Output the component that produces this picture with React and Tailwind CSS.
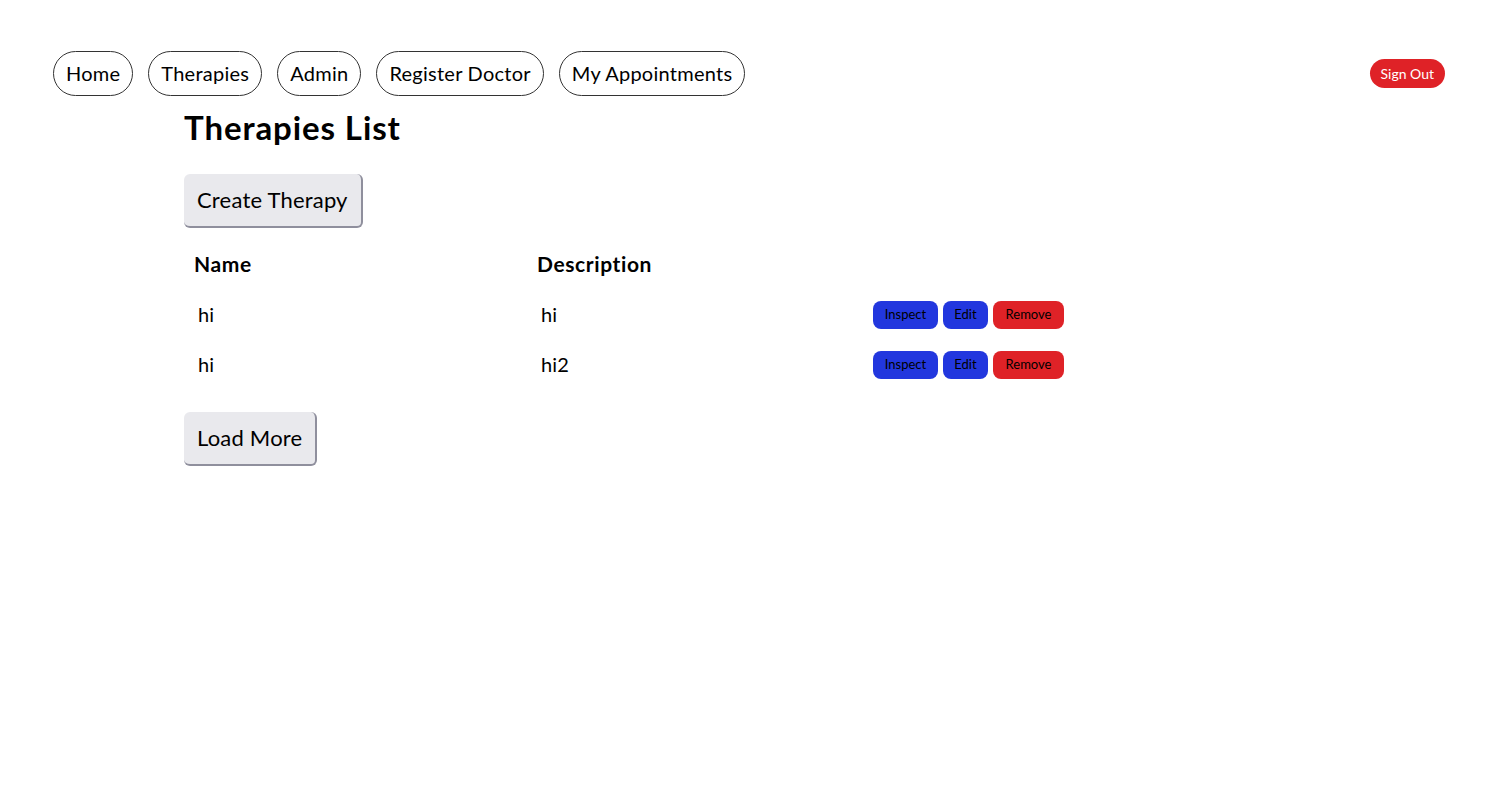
const navLinks = ["Home", "Therapies", "Admin", "Register Doctor", "My Appointments"];

const therapies = [
  { name: "hi", description: "hi" },
  { name: "hi", description: "hi2" },
];

function GrayButton({ children }) {
  return (
    <button className="h-[54px] px-[13px] rounded-[6px] bg-[#e9e9ed] text-[22px] tracking-[0.2px] text-black border-b-2 border-r-2 border-[#8f8f9d] leading-none">
      {children}
    </button>
  );
}

export default function App() {
  return (
    <div className="min-h-screen bg-white text-black font-['Lato','Noto_Sans',sans-serif]">
      {/* 상단 네비게이션 */}
      <nav className="flex items-center justify-between pt-[51px] pl-[53px] pr-[52px]">
        <div className="flex gap-[15px]">
          {navLinks.map((link) => (
            <a
              key={link}
              className="h-[45px] flex items-center px-[12px] pb-[2px] rounded-full border border-[#333] text-[20px] tracking-[0.25px]"
            >
              {link}
            </a>
          ))}
        </div>
        <button className="h-[29px] px-[11px] pb-[1px] rounded-full bg-[#df2227] text-white text-[14px]">
          Sign Out
        </button>
      </nav>

      <main className="pl-[184px]">
        <h1 className="text-[33px] font-bold tracking-[0.9px] leading-none mt-[15px] mb-[30px]">Therapies List</h1>

        <GrayButton>Create Therapy</GrayButton>

        {/* 목록 */}
        <table className="mt-[16px] mb-[23px] border-collapse">
          <thead>
            <tr className="h-[45px] text-left text-[21px] tracking-[0.6px]">
              <th className="w-[343px] px-[10px] pb-[6px] font-bold">Name</th>
              <th className="w-[336px] px-[10px] pb-[6px] font-bold">Description</th>
              <th className="px-[10px]"></th>
            </tr>
          </thead>
          <tbody>
            {therapies.map((t, i) => (
              <tr key={i} className="h-[50px] text-[20px] tracking-[0.2px]">
                <td className="px-[14px] pb-[1px]">{t.name}</td>
                <td className="px-[14px] pb-[1px]">{t.description}</td>
                <td className="px-[10px] pt-[2px]">
                  <div className="flex gap-[5px] text-[13px] tracking-normal">
                    <button className="h-[28px] w-[65px] rounded-[8px] bg-[#2237de]">Inspect</button>
                    <button className="h-[28px] w-[45px] rounded-[8px] bg-[#2237de]">Edit</button>
                    <button className="h-[28px] w-[71px] rounded-[8px] bg-[#df2227]">Remove</button>
                  </div>
                </td>
              </tr>
            ))}
          </tbody>
        </table>

        <GrayButton>Load More</GrayButton>
      </main>
    </div>
  );
}
